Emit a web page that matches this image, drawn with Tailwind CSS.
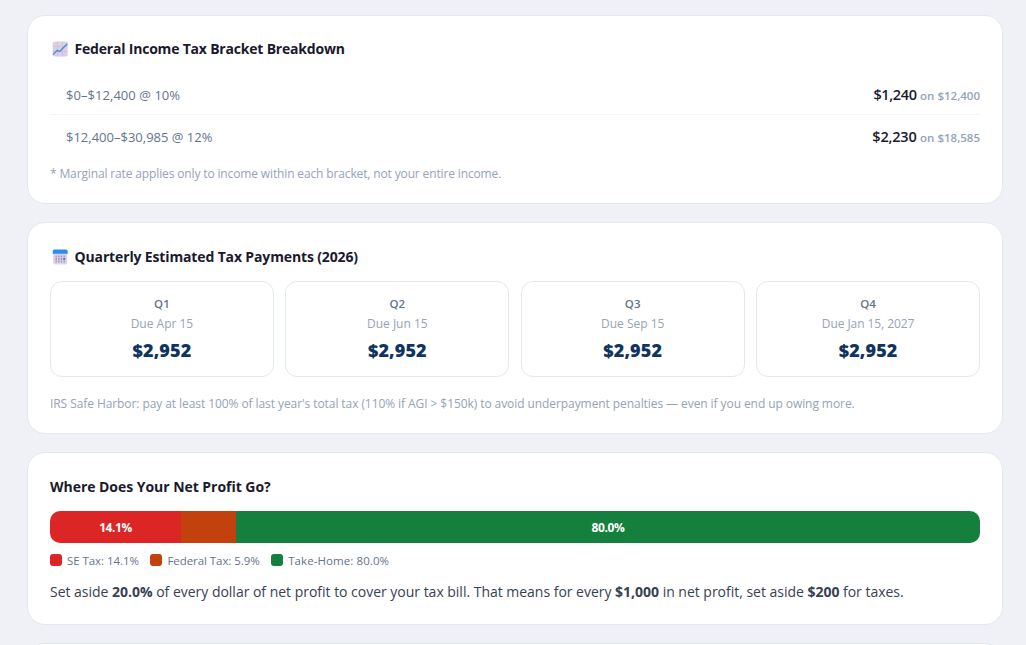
<!DOCTYPE html>
<html lang="en">
<head>
    <meta charset="UTF-8">
    <meta name="viewport" content="width=device-width, initial-scale=1.0">
    <title>Self-Employment Tax Results</title>
    <script src="https://cdn.jsdelivr.net/npm/@tailwindcss/browser@4"></script>
</head>
<body class="bg-[#eff1f6] font-['Segoe_UI','Open_Sans',sans-serif] text-[#1a1a2e]">
    <main class="pl-[27px] w-[1003px] h-[645px] overflow-hidden pt-[15px] flex flex-col gap-[18px]">

        <!-- Bracket breakdown -->
        <section class="h-[189px] shrink-0 bg-white border border-[#e2e8f0] rounded-[18px] px-[22px] pt-[21px]">
            <h2 class="flex items-center h-[22px] text-[14px] font-bold tracking-[-0.2px] whitespace-nowrap">
                <svg class="w-4 h-4 mt-[2px] ml-[2px] mr-[6.5px] shrink-0" viewBox="0 0 16 16">
                    <defs>
                        <linearGradient id="paper" x1="0" y1="0" x2="0" y2="1">
                            <stop offset="0" stop-color="#d9d5de" />
                            <stop offset="1" stop-color="#dccbea" />
                        </linearGradient>
                    </defs>
                    <rect x="0.7" y="0.5" width="15" height="15" rx="1.8" fill="url(#paper)" />
                    <path d="M5.5 .5v15M10.5 .5v15M.7 5.500h15M.7 10.500h15" stroke="#c6b9d2" stroke-width=".6" />
                    <path d="M1 13.600 5.200 9.300l2.400 1.200L15.300 2.800" fill="none" stroke="#3f8fd8" stroke-width="1.300" stroke-linejoin="round" />
                </svg>
                <span>Federal Income Tax Bracket Breakdown</span>
            </h2>
            <div class="mt-[15px]">
                <div class="flex items-baseline justify-between h-[41px] leading-[41px] pl-4 border-b border-[#f1f5f9]">
                    <span class="text-[13px] tracking-[0.05px] text-[#64748b]">$0–$12,400 @ 10%</span>
                    <span class="text-[14.5px] tracking-[-0.35px] font-semibold">$1,240 <small class="text-[11.5px] tracking-normal text-[#94a3b8]">on $12,400</small></span>
                </div>
                <div class="flex items-baseline justify-between h-[43px] leading-[43px] pl-4">
                    <span class="text-[13px] text-[#64748b]">$12,400–$30,985 @ 12%</span>
                    <span class="text-[14.5px] tracking-[-0.2px] font-semibold">$2,230 <small class="text-[11.5px] tracking-normal text-[#94a3b8]">on $18,585</small></span>
                </div>
            </div>
            <p class="mt-[6px] leading-[20px] text-[12px] tracking-[-0.137px] text-[#94a3b8] whitespace-nowrap">* Marginal rate applies only to income within each bracket, not your entire income.</p>
        </section>

        <!-- Quarterly payments -->
        <section class="h-[212px] shrink-0 bg-white border border-[#e2e8f0] rounded-[18px] px-[22px] pt-[22px]">
            <h2 class="flex items-center h-[22px] text-[14px] font-bold tracking-[-0.14px] whitespace-nowrap">
                <svg class="w-4 h-4 mt-px ml-[2px] mr-[6.5px] shrink-0" viewBox="0 0 16 16">
                    <path d="M1.200 4h14v9.500a2 2 0 0 1-2 2h-10a2 2 0 0 1-2-2z" fill="#dfd3ec" />
                    <path d="M.7 4.700V2.500a2 2 0 0 1 2-2h11a2 2 0 0 1 2 2v2.200z" fill="#2b8df2" />
                    <path d="M4.200 6.500v7.500M6.900 6.500v7.500M9.500 6.500v7.500M12.200 6.500v7.500" stroke="#9b93b8" stroke-width="1.300" stroke-dasharray="1.900 .6" />
                    <rect x="11.300" y="9" width="2" height="2" fill="#2b8df2" />
                </svg>
                <span>Quarterly Estimated Tax Payments (2026)</span>
            </h2>
            <div class="mt-[14px] grid grid-cols-4 gap-[11.5px] text-center">
                <div class="h-[96px] border border-[#e2e8f0] rounded-[12px] pt-[12px]">
                    <div class="leading-5 text-[11.5px] font-semibold text-[#64748b]">Q1</div>
                    <div class="leading-5 text-[12px] text-[#94a3b8]">Due Apr 15</div>
                    <div class="mt-[2px] leading-7 text-[18px] tracking-[0.1px] font-extrabold text-[#0f3460]">$2,952</div>
                </div>
                <div class="h-[96px] border border-[#e2e8f0] rounded-[12px] pt-[12px]">
                    <div class="leading-5 text-[11.5px] font-semibold text-[#64748b]">Q2</div>
                    <div class="leading-5 text-[12px] text-[#94a3b8]">Due Jun 15</div>
                    <div class="mt-[2px] leading-7 text-[18px] tracking-[0.1px] font-extrabold text-[#0f3460]">$2,952</div>
                </div>
                <div class="h-[96px] border border-[#e2e8f0] rounded-[12px] pt-[12px]">
                    <div class="leading-5 text-[11.5px] font-semibold text-[#64748b]">Q3</div>
                    <div class="leading-5 text-[12px] text-[#94a3b8]">Due Sep 15</div>
                    <div class="mt-[2px] leading-7 text-[18px] tracking-[0.1px] font-extrabold text-[#0f3460]">$2,952</div>
                </div>
                <div class="h-[96px] border border-[#e2e8f0] rounded-[12px] pt-[12px]">
                    <div class="leading-5 text-[11.5px] font-semibold text-[#64748b]">Q4</div>
                    <div class="leading-5 text-[12px] tracking-[-0.08px] text-[#94a3b8]">Due Jan 15, 2027</div>
                    <div class="mt-[2px] leading-7 text-[18px] tracking-[0.1px] font-extrabold text-[#0f3460]">$2,952</div>
                </div>
            </div>
            <p class="mt-[17px] leading-[20px] text-[12px] tracking-[-0.077px] text-[#94a3b8] whitespace-nowrap">IRS Safe Harbor: pay at least 100% of last year's total tax (110% if AGI &gt; $150k) to avoid underpayment penalties — even if you end up owing more.</p>
        </section>

        <!-- Net profit split -->
        <section class="h-[173px] shrink-0 bg-white border border-[#e2e8f0] rounded-[18px] px-[22px] pt-[22px]">
            <h2 class="flex items-center h-[22px] text-[14px] font-bold tracking-[-0.04px] whitespace-nowrap">Where Does Your Net Profit Go?</h2>
            <div class="mt-[14px] flex h-8 rounded-[10px] overflow-hidden text-[12px] tracking-[-0.4px] leading-[34px] text-center font-bold text-white">
                <div class="bg-[#dc2626]" style="width: 14.1%">14.1%</div>
                <div class="bg-[#c2410c]" style="width: 5.9%"></div>
                <div class="bg-[#15803d]" style="width: 80%">80.0%</div>
            </div>
            <div class="mt-[7px] flex items-center gap-[11.5px] h-5 text-[11.5px] text-[#64748b] whitespace-nowrap">
                <div class="flex items-center gap-[5px]"><i class="w-3 h-3 rounded-[3px] bg-[#dc2626]"></i><span class="leading-5 pt-px tracking-[-0.06px]">SE Tax: 14.1%</span></div>
                <div class="flex items-center gap-[5px]"><i class="w-3 h-3 rounded-[3px] bg-[#c2410c]"></i><span class="leading-5 pt-px tracking-[-0.06px]">Federal Tax: 5.9%</span></div>
                <div class="flex items-center gap-[5px]"><i class="w-3 h-3 rounded-[3px] bg-[#15803d]"></i><span class="leading-5 pt-px tracking-[0.08px]">Take-Home: 80.0%</span></div>
            </div>
            <p class="mt-[10px] leading-6 text-[14px] tracking-[-0.018px] text-[#374151] whitespace-nowrap">Set aside <strong>20.0%</strong> of every dollar of net profit to cover your tax bill. That means for every <strong>$1,000</strong> in net profit, set aside <strong>$200</strong> for taxes.</p>
        </section>

        <section class="h-20 shrink-0 bg-white border border-[#e2e8f0] rounded-[18px]"></section>
    </main>
</body>
</html>
